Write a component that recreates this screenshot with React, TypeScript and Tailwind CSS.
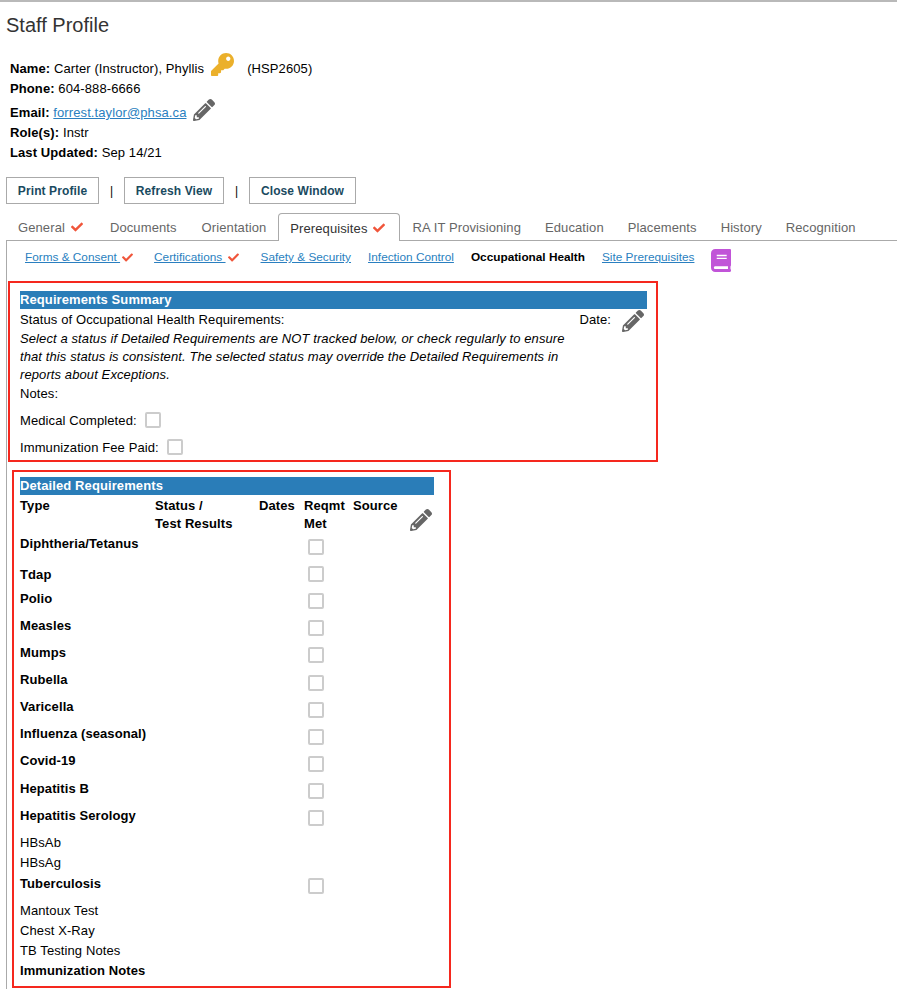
import React from 'react';
import { FaBook, FaCheck, FaKey, FaPencilAlt } from 'react-icons/fa';

const Box = () => <span className="block w-[16px] h-[16px] border-2 border-[#cccccc] rounded-[2px] bg-white" />;

const tabs = ['General', 'Documents', 'Orientation', 'Prerequisites', 'RA IT Provisioning', 'Education', 'Placements', 'History', 'Recognition'];

const rows = [
  { label: 'Diphtheria/Tetanus', h: 'h-[28px]', box: 'pt-[6px]', text: 'pt-px' },
  { label: 'Tdap', h: 'h-[27px]', box: 'pt-[5px]', text: 'pt-[4px]' },
  { label: 'Polio', h: 'h-[27px]', box: 'pt-[5px]', text: 'pt-px' },
  { label: 'Measles', h: 'h-[27px]', box: 'pt-[5px]', text: 'pt-px' },
  { label: 'Mumps', h: 'h-[27px]', box: 'pt-[5px]', text: 'pt-px' },
  { label: 'Rubella', h: 'h-[27px]', box: 'pt-[6px]', text: 'pt-px' },
  { label: 'Varicella', h: 'h-[27px]', box: 'pt-[6px]', text: 'pt-px' },
  { label: 'Influenza (seasonal)', h: 'h-[27px]', box: 'pt-[6px]', text: 'pt-px' },
  { label: 'Covid-19', h: 'h-[28px]', box: 'pt-[6px]', text: 'pt-px' },
  { label: 'Hepatitis B', h: 'h-[27px]', box: 'pt-[5px]', text: 'pt-px' },
  { label: 'Hepatitis Serology', h: 'h-[27px]', box: 'pt-[5px]', text: 'pt-px' },
];

const DetailRow = ({ label, h, box, text }: { label: string; h: string; box: string; text: string }) => (
  <div className={`flex ${h}`}>
    <div className={`w-[288px] font-bold leading-[20px] ${text}`}>{label}</div>
    <div className={box}><Box /></div>
  </div>
);

export default function App() {
  return (
    <div className="w-[897px] h-[989px] overflow-hidden bg-white text-[13px] leading-[20px] tracking-[.1px] text-black font-['Liberation_Sans',Arial,sans-serif]">
      <div className="h-[3px] border-t-2 border-[#b9b9b9]" />
      <h1 className="ml-[6px] mt-[9px] text-[20px] leading-[26px] tracking-normal text-[#333333]">Staff Profile</h1>

      <div className="ml-[10px] mt-[17px]">
        <div className="flex items-center h-[28px]">
          <b>Name:&nbsp;</b>Carter (Instructor), Phyllis
          <FaKey className="w-[23px] h-[23px] ml-[7px] mb-[9px] text-[#ebb02b]" />
          <span className="ml-[13px]">(HSP2605)</span>
        </div>
        <div className="h-[20px] -mt-[4px]"><b>Phone:</b> 604-888-6666</div>
        <div className="flex items-center h-[20px] mt-[4px]">
          <b>Email:&nbsp;</b><a className="text-[#2a7fc0] underline">forrest.taylor@phsa.ca</a>
          <FaPencilAlt className="w-[22px] h-[22px] ml-[6px] mb-[6px] text-[#666666]" />
        </div>
        <div className="h-[20px]"><b>Role(s):</b> Instr</div>
        <div className="h-[20px]"><b>Last Updated:</b> Sep 14/21</div>
      </div>

      <div className="flex items-center ml-[6px] mt-[14px] text-[12px] font-bold text-[#1a4a60]">
        <button className="w-[93px] h-[27px] border border-[#aaaaaa]">Print Profile</button>
        <span className="w-[25px] text-center font-normal text-black">|</span>
        <button className="w-[100px] h-[27px] border border-[#aaaaaa]">Refresh View</button>
        <span className="w-[25px] text-center font-normal text-black">|</span>
        <button className="w-[107px] h-[27px] border border-[#aaaaaa]">Close Window</button>
      </div>

      <div className="flex items-end ml-[6px] mt-[9px] h-[28px] border-b border-[#aaaaaa] text-[#666666] whitespace-nowrap">
        {tabs.map((t) =>
          t === 'Prerequisites' ? (
            <div key={t} className="h-[28px] -mb-[1px] pl-[11px] pr-[12px] pt-[2px] flex items-center border border-b-0 border-[#aaaaaa] rounded-t-[4px] bg-white text-[#333333]">
              {t}<FaCheck className="w-[12px] h-[12px] ml-[6px] mr-[2px] mb-[2px] text-[#f0553a]" />
            </div>
          ) : (
            <div key={t} className={`h-[27px] px-[12px] pt-[2px] flex items-center ${t === 'Orientation' ? 'ml-px' : ''}`}>
              {t}{t === 'General' && <FaCheck className="w-[12px] h-[12px] ml-[6px] mr-[3px] mb-[2px] text-[#f0553a]" />}
            </div>
          )
        )}
      </div>

      <div className="ml-[6px] border-l border-[#aaaaaa] pt-[5px] pl-[1px] h-[760px]">
        <div className="flex items-center h-[22px] text-[11.8px] tracking-normal text-[#2a7fc0] whitespace-nowrap">
          <a className="ml-[17px] underline">Forms &amp; Consent&nbsp;</a><FaCheck className="w-[11px] h-[11px] ml-[2px] text-[#f0553a]" />
          <a className="ml-[21px] underline">Certifications&nbsp;</a><FaCheck className="w-[11px] h-[11px] ml-[2px] text-[#f0553a]" />
          <a className="ml-[22px] underline">Safety &amp; Security</a>
          <a className="ml-[17px] underline">Infection Control</a>
          <b className="ml-[17px] text-black">Occupational Health</b>
          <a className="ml-[17px] underline">Site Prerequisites</a>
          <FaBook className="w-[20px] h-[23px] ml-[17px] mt-[7px] text-[#c154d8]" />
        </div>

        <div className="mt-[13px] w-[650px] h-[181px] border-2 border-[#f5281e] pt-[8px] pl-[10px] pr-[9px]">
          <div className="h-[18px] bg-[#2a7db8] text-white font-bold leading-[18px]">Requirements Summary</div>
          <div className="flex justify-between h-[20px] pt-px">
            <div>Status of Occupational Health Requirements:</div>
            <div className="flex mr-[3px]">
              <span className="mr-[11px]">Date:</span>
              <FaPencilAlt className="w-[22px] h-[22px] text-[#666666]" />
            </div>
          </div>
          <p className="w-[552px] italic leading-[18px] mt-px">
            Select a status if Detailed Requirements are NOT tracked below, or check regularly to ensure that this status is consistent. The selected status may override the Detailed Requirements in reports about Exceptions.
          </p>
          <div>Notes:</div>
          <div className="flex items-center h-[27px] mt-[2px] gap-[8px]"><span className="pt-[2px]">Medical Completed:</span> <Box /></div>
          <div className="flex items-center h-[27px] gap-[8px]"><span className="pt-[2px]">Immunization Fee Paid:</span> <Box /></div>
        </div>

        <div className="mt-[8px] ml-[4px] w-[439px] h-[518px] border-2 border-[#f5281e] pt-[5px] pl-[6px] leading-[18px]">
          <div className="h-[18px] w-[414px] bg-[#2a7db8] text-white font-bold">Detailed Requirements</div>
          <div className="flex font-bold h-[37px] mt-px pt-px">
            <div className="w-[135px]">Type</div>
            <div className="w-[104px]">Status /<br />Test Results</div>
            <div className="w-[45px]">Dates</div>
            <div className="w-[49px]">Reqmt<br />Met</div>
            <div className="w-[57px]">Source</div>
            <FaPencilAlt className="w-[22px] h-[22px] mt-[12px] text-[#666666]" />
          </div>
          {rows.map((r) => <DetailRow key={r.label} {...r} />)}
          <div className="leading-[20px] h-[40px] pt-px">
            <div>HBsAb</div>
            <div>HBsAg</div>
          </div>
          <DetailRow label="Tuberculosis" h="h-[28px]" box="pt-[6px]" text="pt-[2px]" />
          <div className="leading-[20px] pt-px">
            <div>Mantoux Test</div>
            <div>Chest X-Ray</div>
            <div>TB Testing Notes</div>
            <div className="font-bold">Immunization Notes</div>
          </div>
        </div>
      </div>
    </div>
  );
}
